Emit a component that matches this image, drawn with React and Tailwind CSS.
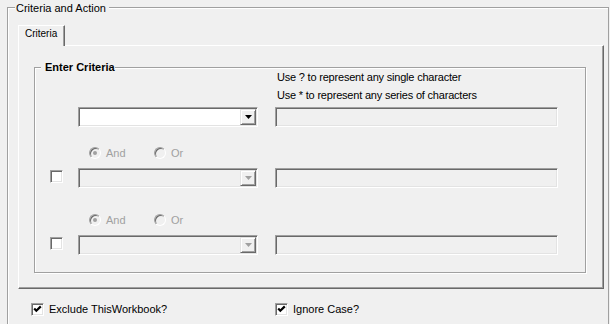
import React from "react";

const sunken =
  "border border-t-[#a0a0a0] border-l-[#a0a0a0] border-r-white border-b-white shadow-[inset_1px_1px_0_#696969,inset_-1px_-1px_0_#e3e3e3]";

function CheckBox({ checked = false }) {
  return (
    <div className={`w-[13px] h-[13px] shrink-0 bg-white ${sunken} flex items-center justify-center`}>
      {checked && (
        <svg width="9" height="9" viewBox="0 0 9 9">
          <path d="M1.2 3.6 L3.3 5.8 L7.8 1.4" fill="none" stroke="#000" strokeWidth="2.2" />
        </svg>
      )}
    </div>
  );
}

function Radio({ label, selected = false }) {
  return (
    <div className="flex items-center gap-[5px]">
      <div className="w-[12px] h-[12px] rounded-full bg-[#f0f0f0] border border-t-[#a0a0a0] border-l-[#a0a0a0] border-r-white border-b-white shadow-[inset_1px_1px_0_#696969] flex items-center justify-center">
        {selected && <div className="w-[4px] h-[4px] rounded-full bg-[#a0a0a0]" />}
      </div>
      <span className="text-[#a0a0a0]">{label}</span>
    </div>
  );
}

function ComboBox({ disabled = false }) {
  return (
    <div
      className={`w-[180px] h-[20px] p-[1px] flex justify-end ${sunken} ${
        disabled ? "bg-[#f0f0f0]" : "bg-white"
      }`}
    >
      <div className="w-[16px] h-[16px] bg-[#f0f0f0] border border-t-[#e3e3e3] border-l-[#e3e3e3] border-r-[#696969] border-b-[#696969] shadow-[inset_1px_1px_0_#fff,inset_-1px_-1px_0_#a0a0a0] flex items-center justify-center">
        <svg width="7" height="4" viewBox="0 0 7 4">
          <path d="M0 0 H7 L3.5 4 Z" fill={disabled ? "#a0a0a0" : "#000"} />
        </svg>
      </div>
    </div>
  );
}

function TextBox() {
  return <div className={`w-[283px] h-[20px] bg-[#f0f0f0] ${sunken}`} />;
}

function CriteriaRow({ withCheck }) {
  return (
    <div className="flex items-start">
      <div className="w-[13px] mt-[2px]">{withCheck && <CheckBox />}</div>
      <div className="ml-[15px]">
        <ComboBox disabled={withCheck} />
      </div>
      <div className="ml-[17px]">
        <TextBox />
      </div>
    </div>
  );
}

function RadioRow({ className = "" }) {
  return (
    <div className={`h-[20px] flex items-center pl-[39px] ${className}`}>
      <div className="w-[65px]">
        <Radio label="And" selected />
      </div>
      <Radio label="Or" />
    </div>
  );
}

export default function App() {
  return (
    <div className="w-[610px] h-[324px] overflow-hidden bg-[#f0f0f0] pt-[7px] pl-[7px] text-black text-[11px] leading-[13px] [font-family:'Liberation_Sans',Arial,sans-serif]">
      {/* Criteria and Action frame */}
      <div className="relative w-[602px] h-[330px] border border-[#a0a0a0] shadow-[inset_1px_1px_0_#fff]">
        <span className="absolute left-[7px] top-[-6px] pl-[1px] pr-[3px] bg-[#f0f0f0]">
          Criteria and Action
        </span>

        {/* tab control */}
        <div className="ml-[10px] mt-[17px]">
          <div className="relative z-10 -mb-px h-[21px] w-[47px] bg-[#f0f0f0] border-t border-l border-r border-t-white border-l-white border-r-[#696969] shadow-[inset_-1px_0_0_#a0a0a0] pl-[6px] pt-[2px] text-[10px] leading-[12px]">
            Criteria
          </div>
          <div className="w-[586px] h-[244px] border border-t-white border-l-white border-r-[#696969] border-b-[#696969] shadow-[inset_-1px_-1px_0_#a0a0a0] pl-[15px] pt-[21px]">
            {/* Enter Criteria group */}
            <div className="relative w-[552px] h-[206px] border border-[#a0a0a0] shadow-[inset_1px_1px_0_#fff,1px_1px_0_#fff] pl-[15px]">
              <span className="absolute left-[6px] top-[-7px] pl-[4px] bg-[#f0f0f0] font-bold">
                Enter Criteria
              </span>
              <div className="ml-[227px] leading-[18px] tracking-[-0.2px]">
                <div>Use ? to represent any single character</div>
                <div>Use * to represent any series of characters</div>
              </div>
              <div className="mt-[3px]">
                <CriteriaRow withCheck={false} />
              </div>
              <RadioRow className="mt-[16px]" />
              <div className="mt-[5px]">
                <CriteriaRow withCheck />
              </div>
              <RadioRow className="mt-[22px]" />
              <div className="mt-[5px]">
                <CriteriaRow withCheck />
              </div>
            </div>
          </div>
        </div>

        {/* options */}
        <div className="mt-[10px] ml-[23px] h-[20px] flex items-center">
          <div className="w-[244px] flex items-center gap-[5px]">
            <CheckBox checked />
            <span>Exclude ThisWorkbook?</span>
          </div>
          <div className="flex items-center gap-[5px]">
            <CheckBox checked />
            <span>Ignore Case?</span>
          </div>
        </div>
      </div>
    </div>
  );
}
